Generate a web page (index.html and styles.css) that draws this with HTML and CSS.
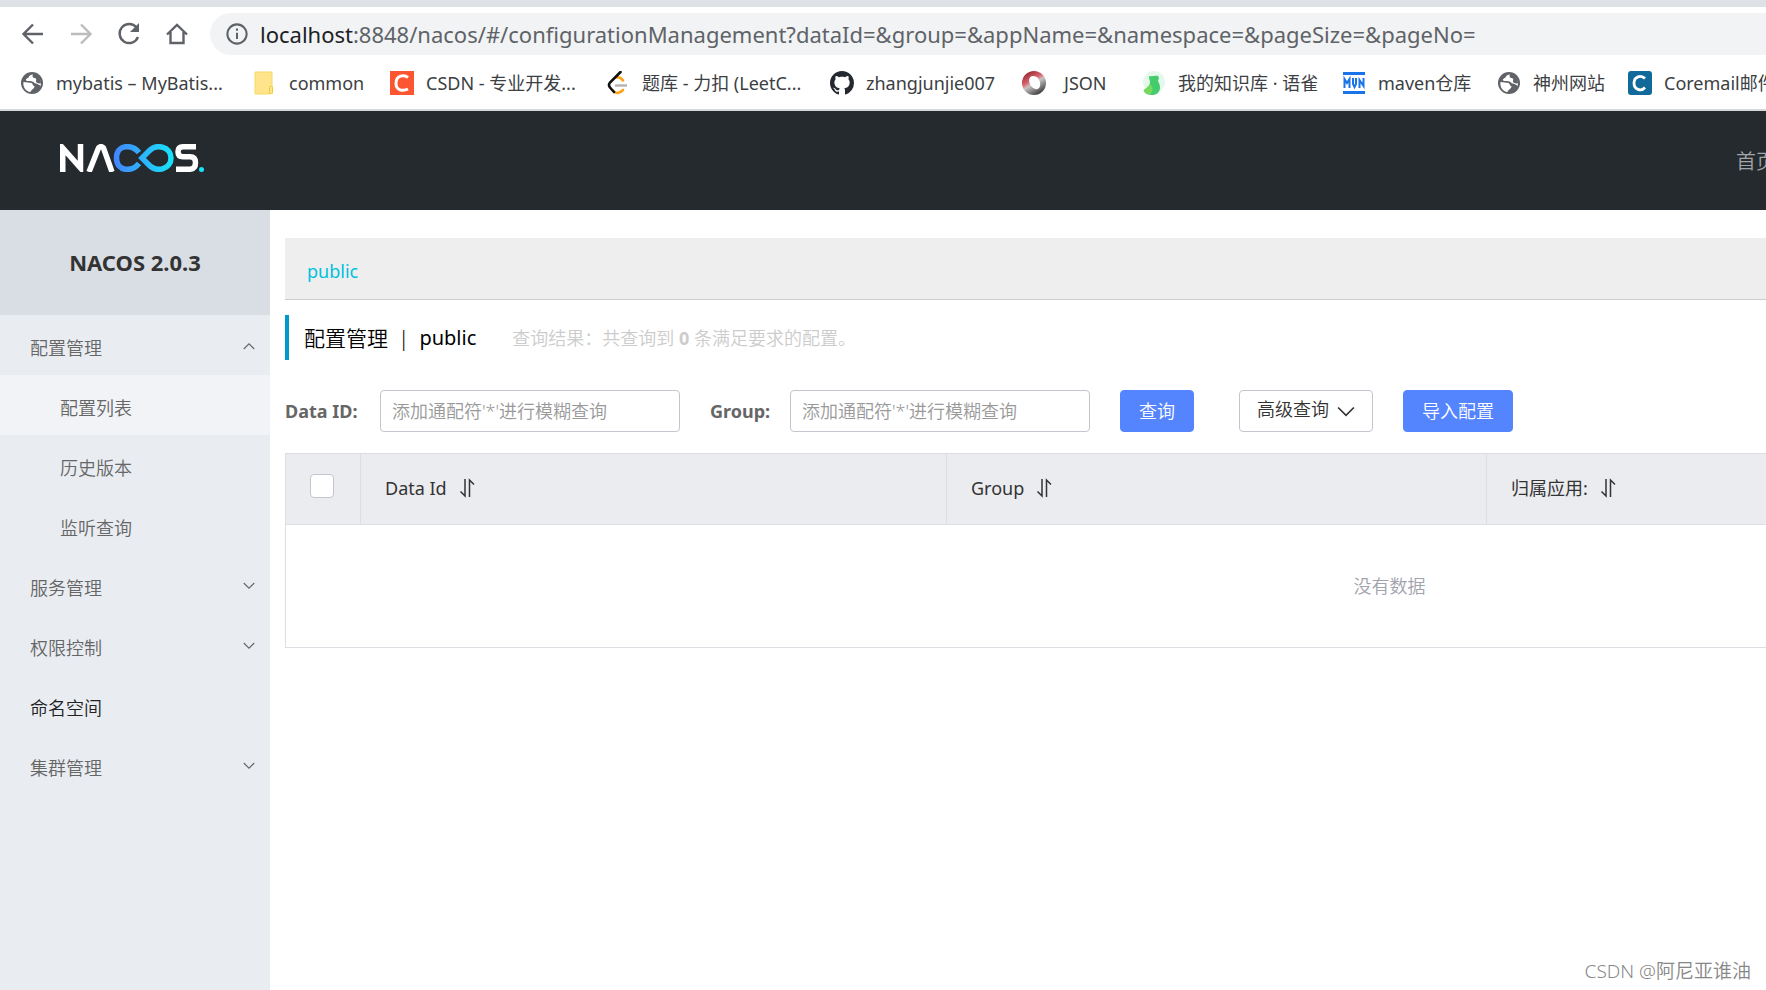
FILE: index.html
```html
<!DOCTYPE html>
<html lang="zh-CN">
<head>
<meta charset="utf-8">
<title>Nacos</title>
<link rel="stylesheet" href="styles.css">
</head>
<body>
<div class="window">
  <svg class="defs" aria-hidden="true">
    <symbol id="globe" viewBox="0 0 24 24"><circle cx="12" cy="12" r="11" fill="#5f6368"/><path d="M3.500 11c3 0 6 1 8 1 2 1 1 3 3 3 0 3-3 3-4 6C6 20.500 2.500 16 3.500 11zM13 3.500c-2 0-4 1-4.500 3-1 1-3 1-2.500 3 2 1 4 0 6 1 2 0 2 2 4 2 2 1 4 1 4.500 3C22 9 18 4 13 3.500z" fill="#fff"/><path d="M13 3c4 0 8 4 8 9-2 1-4 0-5-1 0-2 1-3-1-4-2 0-3-1-2-4z" fill="#5f6368"/></symbol>
    <symbol id="down" viewBox="0 0 16 10"><path d="M1 1l7 7 7-7" fill="none" stroke="currentColor" stroke-width="1.5"/></symbol>
    <symbol id="sort" viewBox="0 0 16 20"><path d="M6 1v17l-4.500-4.500M10.500 19V2L15 6.500" fill="none" stroke="currentColor" stroke-width="1.5"/></symbol>
  </svg>
  <header class="browser">
    <div class="toolbar">
      <button class="nav" aria-label="Back"><svg viewBox="0 0 24 24"><path d="M22 12H3M12 2.500L2.500 12l9.500 9.500"/></svg></button>
      <button class="nav nav-off" aria-label="Forward"><svg viewBox="0 0 24 24"><path d="M2 12h19M12 2.500l9.500 9.500-9.500 9.500"/></svg></button>
      <button class="nav" aria-label="Reload"><svg viewBox="0 0 24 24"><path d="M19.500 5.500A9.500 9.500 0 1 0 21 15"/><path d="M22 1v9h-9z" class="solid"/></svg></button>
      <button class="nav" aria-label="Home"><svg viewBox="0 0 24 24"><path d="M2 12.500L12 3l10 9.500M5.500 10v11h13V10"/></svg></button>
      <div class="address">
        <svg class="info" viewBox="0 0 24 24"><circle cx="12" cy="12" r="10.500"/><path d="M12 10.500v7M12 6v2.500"/></svg>
        <span class="url"><span class="host">localhost</span>:8848/nacos/#/configurationManagement?dataId=&amp;group=&amp;appName=&amp;namespace=&amp;pageSize=&amp;pageNo=</span>
      </div>
    </div>
    <nav class="bookmarks">
      <a href="#"><svg viewBox="0 0 24 24"><use href="#globe"/></svg>mybatis – MyBatis...</a>
      <a href="#"><svg viewBox="0 0 24 24"><path d="M2 1h17v14h1v8H2z" fill="#ffe48c"/><path d="M2 1h17v14M2 1v22h15" fill="none" stroke="#f6d862"/><rect x="16.500" y="15.500" width="3" height="7" rx="1" fill="none" stroke="#efc93c"/></svg>common</a>
      <a href="#"><svg viewBox="0 0 24 24"><path fill="#fc5531" d="M0 0h24v24H0z"/><path d="M18 6.500C14 3.500 6 4 6 12.500c0 7 7 8 12 5.500" fill="none" stroke="#fff" stroke-width="3"/></svg>CSDN - 专业开发...</a>
      <a href="#"><svg viewBox="0 0 24 24"><path d="M11 6.500q3-1 6 3M7.500 20q4 4.500 9.500-1" fill="none" stroke="#ffa116" stroke-width="2.600" stroke-linecap="round"/><path d="M9 14.500h12" stroke="#b3b3b3" stroke-width="2.400"/><path d="M14.500 1L4 11.500q-2 2.500 0 5L8 21" fill="none" stroke="#111" stroke-width="2.600" stroke-linecap="round"/></svg>题库 - 力扣 (LeetC...</a>
      <a href="#"><svg viewBox="0 0 16 16"><path fill="#24292f" d="M8 0C3.580 0 0 3.580 0 8c0 3.540 2.290 6.530 5.470 7.590.4.070.55-.17.55-.38 0-.19-.01-.82-.01-1.490-2.010.37-2.530-.49-2.690-.94-.09-.23-.48-.94-.82-1.130-.28-.15-.68-.52-.01-.53.63-.01 1.080.58 1.230.82.72 1.210 1.870.87 2.330.66.07-.52.28-.87.51-1.070-1.780-.2-3.640-.89-3.640-3.950 0-.87.31-1.590.82-2.150-.08-.2-.36-1.020.08-2.120 0 0 .67-.21 2.200.82.64-.18 1.320-.27 2-.27s1.360.09 2 .27c1.530-1.040 2.200-.82 2.200-.82.44 1.100.16 1.920.08 2.120.51.56.82 1.270.82 2.150 0 3.070-1.870 3.750-3.650 3.950.29.25.54.73.54 1.480 0 1.070-.01 1.930-.01 2.200 0 .21.15.46.55.38A8.010 8.010 0 0 0 16 8c0-4.420-3.580-8-8-8z"/></svg>zhangjunjie007</a>
      <a class="wide" href="#"><svg viewBox="0 0 24 24"><defs><linearGradient id="ring" x1="0" y1="0" x2=".6" y2="1"><stop offset="0" stop-color="#7a1018"/><stop offset=".45" stop-color="#d8626c"/><stop offset=".6" stop-color="#c9c4c4"/><stop offset="1" stop-color="#444"/></linearGradient></defs><path fill="url(#ring)" fill-rule="evenodd" d="M12 0a12 12 0 1 0 0 24a12 12 0 1 0 0-24zM11 5c5 0 8 5 7 10-1 4-5 4-8 1C6 12 6 5 11 5z"/></svg>JSON</a>
      <a href="#"><svg viewBox="0 0 24 24"><circle cx="12" cy="11" r="11" fill="#e6f7ec"/><path d="M7 5c3 1 6-1 9 0l1 2-1 3c4 7 2 13-5 14-4 0-8-1-9-4 3-2 6-5 6-9 0-2-1-3-1-6z" fill="#44cb6b"/><path d="M1.500 19c3-2 5-4 6.500-6 4 3 3 8 0 10.500-3 0-5.500-1.500-6.500-4.500z" fill="#76d95f"/></svg>我的知识库 · 语雀</a>
      <a href="#"><svg viewBox="0 0 24 24"><path d="M1 1h22v3H1zM1 20h22v3H1z" fill="#1a73e8"/><path d="M2.500 17V8L5 12l2.500-4v9M11 7v6l1.500 3 1.500-3V7M17.500 17V9l4 6V7" fill="none" stroke="#1a73e8" stroke-width="2"/></svg>maven仓库</a>
      <a href="#"><svg viewBox="0 0 24 24"><use href="#globe"/></svg>神州网站</a>
      <a href="#"><svg viewBox="0 0 24 24"><rect width="24" height="24" rx="3" fill="#126a9a"/><path d="M17 7.500c-4-4-11-2-11 4.500s7 9 11 4.500" fill="none" stroke="#fff" stroke-width="2.800"/></svg>Coremail邮件</a>
    </nav>
  </header>
  <div class="topbar">
    <svg class="logo" viewBox="0 0 144 28" role="img" aria-label="NACOS">
      <defs><linearGradient id="inf" gradientUnits="userSpaceOnUse" x1="54" y1="0" x2="114" y2="0"><stop offset="0" stop-color="#4285ff"/><stop offset="1" stop-color="#17e5fb"/></linearGradient></defs>
      <g fill="none" stroke-width="5.500">
        <path d="M2.750 28V4L20.500 24V0M29 28L38.500 4q2.500-2.500 5 0L52 28" stroke="#fff"/>
        <path d="M79 8.500C72 0 56.500 0 56.500 14S72 28 79 19.500M82 14l7-7c8-8 22-4 22 7s-14 15-22 7z" stroke="url(#inf)"/>
        <path d="M136 2.750h-13q-5 0-5 5t5 5h7q5.500 0 5.500 6t-5.500 6.500h-14" stroke="#fff"/>
      </g>
      <circle cx="141.500" cy="25.500" r="2.500" fill="#17e5fb"/>
    </svg>
    <a class="home" href="#">首页</a>
  </div>
  <div class="body">
    <aside class="side">
      <h1>NACOS 2.0.3</h1>
      <nav class="menu">
        <a href="#">配置管理<svg class="flip"><use href="#down"/></svg></a>
        <a class="sub current" href="#">配置列表</a>
        <a class="sub" href="#">历史版本</a>
        <a class="sub" href="#">监听查询</a>
        <a href="#">服务管理<svg><use href="#down"/></svg></a>
        <a href="#">权限控制<svg><use href="#down"/></svg></a>
        <a class="dark" href="#">命名空间</a>
        <a href="#">集群管理<svg><use href="#down"/></svg></a>
      </nav>
    </aside>
    <main class="main">
      <div class="spaces"><a href="#">public</a></div>
      <div class="heading">
        <h2><span>配置管理</span><span>|</span><span class="space">public</span></h2>
        <p>查询结果：共查询到 <strong>0</strong> 条满足要求的配置。</p>
      </div>
      <form class="search">
        <label for="data-id">Data ID:</label>
        <input class="field" id="data-id" type="text" placeholder="添加通配符'*'进行模糊查询">
        <label class="second" for="group">Group:</label>
        <input class="field" id="group" type="text" placeholder="添加通配符'*'进行模糊查询">
        <button class="btn primary query" type="button">查询</button>
        <button class="btn advanced" type="button">高级查询<svg><use href="#down"/></svg></button>
        <button class="btn primary" type="button">导入配置</button>
      </form>
      <table class="list">
        <colgroup><col class="c-check"><col class="c-id"><col class="c-group"><col></colgroup>
        <thead>
          <tr>
            <th><input type="checkbox" aria-label="全选"></th>
            <th>Data Id<svg><use href="#sort"/></svg></th>
            <th>Group<svg><use href="#sort"/></svg></th>
            <th>归属应用:<svg><use href="#sort"/></svg></th>
          </tr>
        </thead>
        <tbody><tr><td colspan="4">没有数据</td></tr></tbody>
      </table>
    </main>
  </div>
  <div class="credit">CSDN @阿尼亚谁油</div>
</div>
</body>
</html>
```
FILE: styles.css
```css
* { box-sizing: border-box; }
body {
  margin: 0;
  font: 350 18px/24px "Noto Sans", "Noto Sans CJK SC", sans-serif;
  color: #333;
  background: #fff;
}
a { color: inherit; text-decoration: none; }
button, input { font: inherit; }
.defs { position: absolute; width: 0; height: 0; }
.window {
  position: relative;
  display: flex;
  flex-direction: column;
  min-height: 100vh;
  overflow: hidden;
}

/* browser chrome */
.browser {
  border-top: 7px solid #dee1e6;
  border-bottom: 2px solid #d5d7da;
}
.toolbar {
  display: flex;
  align-items: center;
  gap: 24px;
  padding: 6px 0 0 21px;
}
.nav {
  width: 24px;
  height: 24px;
  padding: 0;
  border: 0;
  background: none;
  color: #5f6368;
}
.nav-off { color: #babcbe; }
.nav svg { display: block; fill: none; stroke: currentColor; stroke-width: 2.4; }
.nav .solid { fill: currentColor; stroke: none; }
.address {
  flex: 1;
  display: flex;
  align-items: center;
  gap: 12px;
  height: 42px;
  margin-left: -3px;
  padding-left: 16px;
  border-radius: 21px 0 0 21px;
  background: #f1f3f4;
}
.info { width: 22px; height: 22px; fill: none; stroke: #5f6368; stroke-width: 2.2; }
.url { font-size: 22px; font-weight: 400; color: #5f6368; white-space: nowrap; }
.host { color: #202124; }
.bookmarks {
  display: grid;
  grid-template-columns: 233px 137px 216px 224px 192px 120px 200px 155px 131px 1fr;
  padding: 10px 0 8px 20px;
}
.bookmarks a {
  display: flex;
  align-items: center;
  gap: 12px;
  height: 36px;
  font-weight: 400;
  color: #3c4043;
  white-space: nowrap;
}
.bookmarks .wide { gap: 18px; }
.bookmarks svg { flex: none; width: 24px; height: 24px; }

/* application header */
.topbar {
  display: flex;
  align-items: center;
  justify-content: space-between;
  height: 99px;
  padding-left: 60px;
  background: #252a2f;
}
.logo { width: 144px; height: 28px; margin-bottom: 6px; }
.home { flex: none; width: 30px; padding-top: 2px; font-size: 20px; white-space: nowrap; color: #a3a5a7; }

.body { flex: 1; display: flex; }
.side { flex: none; width: 270px; background: #e9edf2; }
.side h1 {
  margin: 0;
  height: 105px;
  background: #d9dde4;
  font: 700 22px/105px "Noto Sans", sans-serif;
  text-align: center;
}
.menu a {
  display: flex;
  align-items: center;
  justify-content: space-between;
  height: 60px;
  padding: 5px 15px 0 30px;
  color: #666;
}
.menu .sub { padding-left: 60px; }
.menu .current { background: #f1f3f7; }
.menu .dark { color: #222; }
.menu svg { width: 12px; height: 8px; margin-bottom: 4px; }
.flip { transform: rotate(180deg); }

.main { flex: 1; min-width: 0; padding: 28px 0 0 15px; }
.spaces {
  height: 62px;
  padding: 21px 22px;
  border-bottom: 1px solid #ccc;
  background: #eee;
}
.spaces a { font-weight: 400; color: #00c1de; }
.heading {
  display: flex;
  align-items: center;
  gap: 36px;
  height: 45px;
  margin: 15px 0 30px;
  padding-left: 15px;
  border-left: 4px solid #09c;
}
.heading h2 { display: flex; gap: 10px; margin: 0; font-size: 21px; font-weight: 350; color: #000; }
.heading .space { font-size: 20px; font-weight: 400; }
.heading p { margin: 0; color: #ccc; }
.search { display: flex; align-items: center; }
.search label { width: 95px; font-weight: 700; color: #666; }
.search .second { width: 80px; margin-left: 30px; }
.field {
  width: 300px;
  height: 42px;
  padding: 0 11px;
  border: 1px solid #c4c6cf;
  border-radius: 4px;
}
.field::placeholder { color: #999; }
.btn {
  height: 42px;
  padding: 0 18px;
  margin-left: 30px;
  border: 1px solid #c4c6cf;
  border-radius: 4px;
  background: #fff;
  color: #333;
}
.btn.primary { border-color: #5584ff; background: #5584ff; color: #fff; }
.btn.advanced { padding: 0 17px 4px; margin-left: 45px; }
.btn svg { width: 18px; height: 12px; margin-left: 8px; vertical-align: -2px; }

.list {
  width: 2209px;
  margin-top: 21px;
  table-layout: fixed;
  border-collapse: collapse;
}
.c-check { width: 75px; }
.c-id { width: 586px; }
.c-group { width: 540px; }
.list th {
  height: 71px;
  padding: 0 24px 2px;
  border: 1px solid #dcdee3;
  background: #ebecf0;
  font-weight: 400;
  text-align: left;
}
.list th svg { width: 16px; height: 20px; margin-left: 12px; vertical-align: -3px; }
.list td {
  height: 123px;
  border: 1px solid #dcdee3;
  color: #a0a2ad;
  text-align: center;
}
.list input {
  appearance: none;
  display: block;
  width: 24px;
  height: 24px;
  margin: 0 0 4px;
  border: 1px solid #c4c6cf;
  border-radius: 4px;
  background: #fff;
}
.credit {
  position: absolute;
  right: 15px;
  bottom: 7px;
  font-size: 19px;
  color: #888;
}
```
